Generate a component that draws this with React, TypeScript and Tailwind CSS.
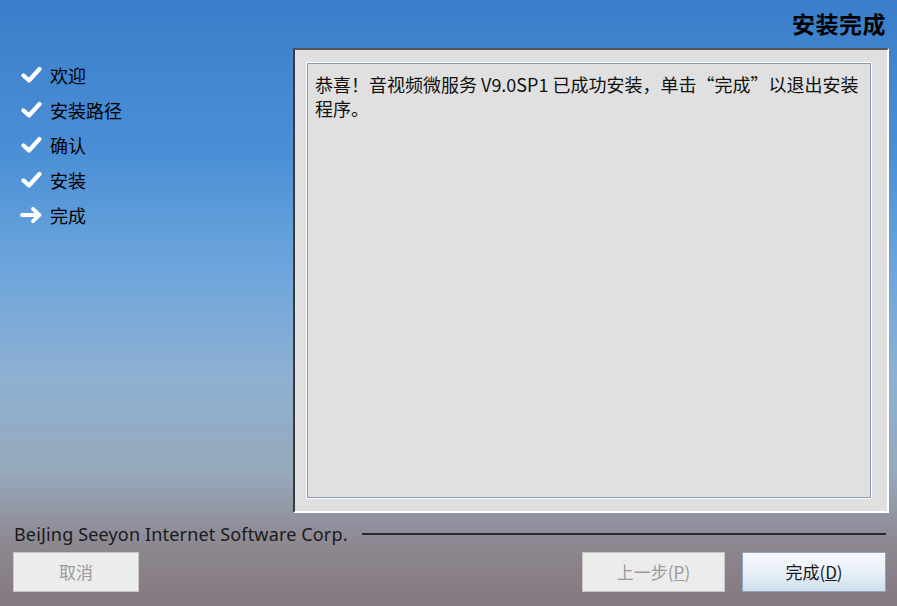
import React from "react";

const Check = () => (
  <svg width="21" height="18" viewBox="0 0 21 18" className="shrink-0">
    <path d="M2.5 9.5 L8 14.5 L18.5 3" stroke="white" strokeWidth="4.2" fill="none" strokeLinecap="round" strokeLinejoin="round" />
  </svg>
);

const Arrow = () => (
  <svg width="23" height="18" viewBox="0 0 23 18" className="shrink-0">
    <path d="M2 9 L19 9 M13 2.8 L19.5 9 L13 15.2" stroke="white" strokeWidth="3.8" fill="none" strokeLinecap="round" strokeLinejoin="round" />
  </svg>
);

const steps: { label: string; done: boolean }[] = [
  { label: "欢迎", done: true },
  { label: "安装路径", done: true },
  { label: "确认", done: true },
  { label: "安装", done: true },
  { label: "完成", done: false },
];

export default function App() {
  const cjk = { fontFamily: '"Noto Sans CJK SC", "Noto Sans", sans-serif' };
  return (
    <div
      className="w-[897px] h-[606px] overflow-hidden flex flex-col bg-[linear-gradient(180deg,#3a7ec9_0%,#4a8fd6_25%,#6ea6dc_45%,#8eb0d2_62%,#97a9bb_78%,#8d8790_90%,#857880_100%)] text-black"
      style={cjk}
    >
      <div className="flex justify-end pr-[11px] pt-[7px] h-[48px]">
        <div className="text-[23px] font-bold leading-[32px] tracking-[0.5px]">安装完成</div>
      </div>
      <div className="flex flex-1 min-h-0">
        <div className="w-[293px] shrink-0 pt-[15px] pl-[21px] flex flex-col gap-[11px]">
          {steps.map((s) => (
            <div key={s.label} className="flex items-center h-[24px] gap-[8px]">
              <div className="w-[21px] flex justify-center">{s.done ? <Check /> : <Arrow />}</div>
              <span className="text-[18px] leading-[24px]">{s.label}</span>
            </div>
          ))}
        </div>
        <div className="w-[596px] h-[465px] bg-[#e0e0e0] border-t-2 border-l-2 border-t-[#555] border-l-[#3a3a3a] border-r-2 border-b-2 border-r-white border-b-white pl-[11px] pt-[12px] pr-[15px] pb-[12px]">
          <div className="w-full h-full border border-white">
            <div className="w-full h-full border border-[#8a9ab0] bg-[#e0e0e0] pl-[7px] pr-[4px] pt-[8px] text-[18px] leading-[24px] text-[#111]">
              恭喜！音视频微服务 V9.0SP1 已成功安装，单击“完成”以退出安装程序。
            </div>
          </div>
        </div>
      </div>
      <div className="flex items-center pl-[14px] pr-[11px] mt-[14px] h-[22px]">
        <span className="text-[18px] tracking-[0.16px] text-[#1a1a1a] whitespace-nowrap" style={{ fontFamily: '"Noto Sans", "Open Sans", sans-serif' }}>
          BeiJing Seeyon Internet Software Corp.
        </span>
        <div className="flex-1 ml-[14px] h-[2px] bg-[#2a2a2a]" />
      </div>
      <div className="flex items-center pl-[13px] pr-[11px] mt-[7px] mb-[14px]">
        <button className="w-[126px] h-[40px] bg-[#ececec] border border-[#c8c8c8] text-[#9a9a9a] text-[17px]">取消</button>
        <div className="flex-1" />
        <button className="w-[143px] h-[40px] bg-[#ececec] border border-[#c8c8c8] text-[#9a9a9a] text-[17px]">
          上一步(<span className="underline">P</span>)
        </button>
        <button className="ml-[17px] w-[144px] h-[40px] bg-[linear-gradient(180deg,#f6f9fd_0%,#e8f0f8_50%,#cfdeed_100%)] border border-[#8fa6bd] text-[#1a1a1a] text-[17px]">
          完成(<span className="underline">D</span>)
        </button>
      </div>
    </div>
  );
}
